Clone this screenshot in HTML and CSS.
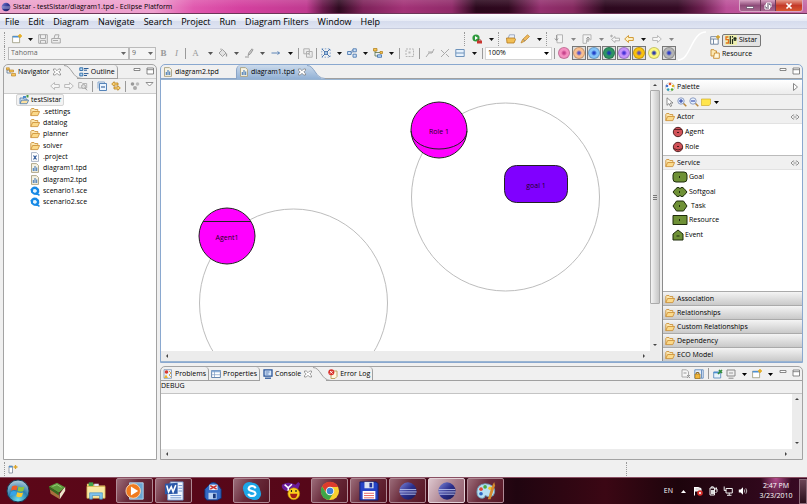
FILE: index.html
```html
<!DOCTYPE html>
<html lang="en">
<head>
<meta charset="utf-8">
<title>Sistar - testSistar/diagram1.tpd - Eclipse Platform</title>
<link rel="stylesheet" href="styles.css">
</head>
<body>
<svg class="sprite" aria-hidden="true">
  <defs>
    <linearGradient id="ecl" x1="0" y1="0" x2="1" y2="1"><stop offset="0" stop-color="#7d86d8"/><stop offset=".5" stop-color="#2b2f8c"/><stop offset="1" stop-color="#17164f"/></linearGradient>
    <radialGradient id="orb" cx=".5" cy=".9" r=".9"><stop offset="0" stop-color="#6fe0ee"/><stop offset=".5" stop-color="#2c7fae"/><stop offset="1" stop-color="#b7cfdd"/></radialGradient>
    <linearGradient id="tabBlue" x1="0" y1="0" x2="0" y2="1"><stop offset="0" stop-color="#cbdaeb"/><stop offset="1" stop-color="#92b1d5"/></linearGradient>
  </defs>
  <symbol id="caret" viewBox="0 0 10 10"><path d="M3 4h5L5.500 7z" fill="currentColor"/></symbol>
  <symbol id="folder" viewBox="0 0 10 10"><path d="M.8 8.500V2.500l.8-1h2.400l.8 1h3v1.500" fill="#fbe6b0" stroke="#c98a2d" stroke-width=".8"/><path d="M.8 8.600L2.600 4.500h7L7.800 8.600z" fill="#fbd98a" stroke="#c98a2d" stroke-width=".8"/></symbol>
  <symbol id="project" viewBox="0 0 10 10"><path d="M1 8.500V3h3l.8 1H8v1" fill="#d9e7f6" stroke="#4575a8" stroke-width=".8"/><path d="M1 8.700l1.600-3.500h7L8 8.700z" fill="#fbe0a0" stroke="#4a78ad" stroke-width=".8"/><path d="M4 1h3v2H4z" fill="#4a88cf"/><path d="M7.500 0h2v2.500h-2z" fill="#4a9a40"/></symbol>
  <symbol id="xfile" viewBox="0 0 10 10"><path d="M1.500.6h5l2 2v6.800h-7z" fill="#fff" stroke="#98a4b8" stroke-width=".8"/><path d="M3.500 3.500l3 4M6.500 3.500l-3 4" stroke="#224f94" stroke-width="1.200"/></symbol>
  <symbol id="tpd" viewBox="0 0 10 10"><path d="M1.500.6h5l2 2v6.800h-7z" fill="#f7f3e3" stroke="#a8a080" stroke-width=".9"/><path d="M3.300 8V5M5 8V3M6.700 8V4.500" stroke="#4a7db8" stroke-width="1.100"/></symbol>
  <symbol id="sce" viewBox="0 0 10 10"><path d="M2 1.500l2-1 2.500.3L9 3l.3 3L7.500 9 4 8.800 1.200 6.800.5 3.500z" fill="#1689e6"/><path d="M3.300 3.300l2.200-.3 1.500 1.700-.8 1.800-2 .2L3 5.200z" fill="#e4f4ff"/><path d="M6 7l3.500 2.300" stroke="#1689e6" stroke-width="1.500"/></symbol>
  <symbol id="nav" viewBox="0 0 10 10"><path d="M1 1v5h4M1 3h3" stroke="#5c7796" fill="none" stroke-width=".8"/><path d="M.3.800h3v2h-3zM3.500 3h4v2h-4zM5.500 6.500h4v2.500h-4z" fill="#f7c65a" stroke="#b27a1c" stroke-width=".6"/></symbol>
  <symbol id="outline" viewBox="0 0 10 10"><path d="M.8.800h3v2.700h-3zM.8 6.200h3v2.700h-3z" fill="#b9dcf5" stroke="#2a68a6" stroke-width=".9"/><path d="M5 1.500h4.500M5 3.200h3M5 6.600h4.500M5 8.500h3" stroke="#2a5c96"/></symbol>
  <symbol id="x" viewBox="0 0 10 10"><path d="M1.500 2h1.800L5 3.700 6.700 2h1.800v1.300L6.800 5l1.700 1.700V8H6.700L5 6.300 3.300 8H1.500V6.700L3.200 5 1.500 3.300z" fill="#fff" stroke="#777" stroke-width=".7"/></symbol>
  <symbol id="min" viewBox="0 0 10 10"><path d="M2 1.500h6v2H2z" fill="#fff" stroke="#6c6c6c" stroke-width=".8"/></symbol>
  <symbol id="max" viewBox="0 0 10 10"><path d="M2 1h6.500v6H2zM2 2.700h6.500" fill="#fff" stroke="#6c6c6c" stroke-width=".8"/></symbol>
  <symbol id="new" viewBox="0 0 10 10"><path d="M.6 2.200h7v6.500h-7z" fill="#fff" stroke="#8d8a68" stroke-width=".7"/><path d="M.6 2h7v1.500h-7z" fill="#4c8fd0"/><path d="M8 0v4M6 2h4" stroke="#e3aa1e" stroke-width="1.500"/></symbol>
  <symbol id="save" viewBox="0 0 10 10"><path d="M.7.700h8.600v8.600H.7zM2.500.700v3.800h5V.700M2.500 9.300V6.400h5v2.900" fill="#eee" stroke="#aaa"/></symbol>
  <symbol id="print" viewBox="0 0 10 10"><path d="M3 4.500L4 .8h4L7 4.500M.7 4.500h8.600V9H.7z" fill="#eee" stroke="#aaa"/><path d="M2 6.500h5" stroke="#aaa"/></symbol>
  <symbol id="run" viewBox="0 0 10 10"><circle cx="4" cy="4" r="3.600" fill="#2f9a3d"/><path d="M3 2l3 2-3 2z" fill="#fff"/><path d="M5 6.500h5v3H5z" fill="#c8342e"/><path d="M6.500 6.500v-.8h2v.8" stroke="#8c1c18" fill="none" stroke-width=".6"/></symbol>
  <symbol id="open" viewBox="0 0 10 10"><path d="M2 4.500L3.500.800h5L8.500 5" fill="#eaf0fa" stroke="#7f8fae" stroke-width=".7"/><path d="M.5 4h8l1 1.500-1.500 3.500h-7z" fill="#f2bf55" stroke="#b37a20" stroke-width=".8"/></symbol>
  <symbol id="pen" viewBox="0 0 10 10"><path d="M1 9l1.500-3.500L7.500.8l2 1.700L5 7z" fill="#f0b95c" stroke="#b9842a" stroke-width=".7"/><path d="M3 5.300l2 1.700" stroke="#888"/></symbol>
  <symbol id="annot" viewBox="0 0 10 10"><path d="M3 .8h5.500v8H3z" fill="#f4f4f4" stroke="#b4b4b4"/><path d="M2.500 1v5M.8 4.500l1.700 2 1.700-2" fill="none" stroke="#999"/></symbol>
  <symbol id="annotup" viewBox="0 0 10 10"><path d="M1 .8h8v5H4.500v3.500H1z" fill="#f4f4f4" stroke="#b4b4b4"/><path d="M6 8V3M4.300 4.700L6 3l1.700 1.700" fill="none" stroke="#999"/></symbol>
  <symbol id="back" viewBox="0 0 10 10"><path d="M.7 5l3.800-3.500v2H9.300v3H4.500v2z" fill="#fdf0c4" stroke="#cf9328" stroke-width=".9"/></symbol>
  <symbol id="gback" viewBox="0 0 10 10"><path d="M.7 5l3.800-3.500v2H9.300v3H4.500v2z" fill="#f6f6f6" stroke="#b4b4b4" stroke-width=".9"/></symbol>
  <symbol id="glast" viewBox="0 0 10 10"><path d="M1.500 5.500l3.500-3v1.700h4.500v2.600H5v1.700z" fill="#f6f6f6" stroke="#aaa" stroke-width=".9"/><path d="M1.500.5v3M0 2h3M.5 1l2 2M2.500 1l-2 2" stroke="#aaa" stroke-width=".6"/></symbol>
  <symbol id="gfwd" viewBox="0 0 10 10"><path d="M9.300 5L5.500 1.500v2H.7v3h4.800v2z" fill="#f6f6f6" stroke="#b4b4b4" stroke-width=".9"/></symbol>
  <symbol id="gup" viewBox="0 0 10 10"><path d="M.7 1.500h3l1 1h4V7h-8z" fill="#eee" stroke="#b4b4b4"/><circle cx="5.500" cy="5.500" r="2" fill="#ddd" stroke="#aaa"/><path d="M7 7l2 2.300" stroke="#999"/></symbol>
  <symbol id="collapse" viewBox="0 0 10 10"><path d="M1 1h6.500v6M1 1v6.500" fill="none" stroke="#88a9cf"/><path d="M2.500 2.500h7v7h-7z" fill="#eaf4ff" stroke="#5583b8"/><path d="M4 6h4" stroke="#1f4f8b"/></symbol>
  <symbol id="link" viewBox="0 0 10 10"><path d="M.7 3l2.500-2.300V2H7v2H3.200v1.300zM9.300 7L6.800 4.700V6H3v2h3.800v1.300z" fill="#fbd375" stroke="#b87d16" stroke-width=".8"/></symbol>
  <symbol id="filter" viewBox="0 0 10 10"><circle cx="2.500" cy="3" r="1.800" fill="#999"/><circle cx="7.500" cy="3" r="1.800" fill="#bbb"/><circle cx="5" cy="7" r="2" fill="#aaa"/></symbol>
  <symbol id="viewmenu" viewBox="0 0 10 10"><path d="M2 1.500h7L5.500 5z" fill="#fff" stroke="#777" stroke-width=".8"/></symbol>
  <symbol id="bucket" viewBox="0 0 10 10"><path d="M1 5l3.500-3.500L8 5 4.500 8.500zM3 2V.500" fill="#e2e2e2" stroke="#999" stroke-width=".9"/><path d="M8.500 5.500v3" stroke="#999" stroke-width="1.300"/></symbol>
  <symbol id="brush" viewBox="0 0 10 10"><path d="M1 9h4M4 7.500l1-3L8 .8l1 1-2.500 4z" stroke="#999" fill="#ccc"/></symbol>
  <symbol id="line" viewBox="0 0 10 10"><path d="M.5 5h8M6.500 3.500L8.500 5l-2 1.500" stroke="#4d79b0" fill="none" stroke-width=".9"/></symbol>
  <symbol id="copyapp" viewBox="0 0 10 10"><path d="M.8.800h5.500v5H.8zM3.500 3.500h5.700v5.700H3.500z" fill="#eee" stroke="#b0b0b0"/><path d="M5 5l2 2.500" stroke="#aaa"/></symbol>
  <symbol id="selall" viewBox="0 0 10 10"><path d="M.8.800h8.400v8.400H.8z" fill="none" stroke="#6d95c8" stroke-width=".8" stroke-dasharray="1.500 1.500"/><path d="M1 1l8 8M9 1L1 9" stroke="#3c6caa" stroke-width=".9"/><path d="M3.500 3.500h3v3h-3z" fill="#9ec3ea" stroke="#315e9a" stroke-width=".7"/></symbol>
  <symbol id="arrange" viewBox="0 0 10 10"><path d="M.6 3.500h3.500v3H.6zM6 .8h3.300v3H6zM6 6.200h3.300v3H6z" fill="#d2e5fa" stroke="#4d79b0" stroke-width=".9"/><path d="M4 5h1V2h1" stroke="#4d79b0" fill="none" stroke-width=".7"/></symbol>
  <symbol id="layout" viewBox="0 0 10 10"><path d="M2 2v6h4M2 4.500h5" stroke="#55714b" fill="none" stroke-width=".8"/><path d="M.5.500h3.500v2.500H.5zM7 3.500h2.500v2H7z" fill="#f5c451" stroke="#ac7a15" stroke-width=".7"/><path d="M4.500 6.800h4v2.500h-4z" fill="#b4d8fb" stroke="#3c6caa" stroke-width=".8"/></symbol>
  <symbol id="gsel" viewBox="0 0 10 10"><path d="M1 1h7.500v7.500H1z" fill="none" stroke="#b4b4b4" stroke-dasharray="2 1"/><path d="M3.500 3.500h2v2h-2z" fill="#bbb"/></symbol>
  <symbol id="galign" viewBox="0 0 10 10"><path d="M1 9L4 5h3l2-4M3 4h5" fill="none" stroke="#aaa"/></symbol>
  <symbol id="gcross" viewBox="0 0 10 10"><path d="M1 9l8-8M1 2l3 3M6 6l3 3" fill="none" stroke="#aaa"/></symbol>
  <symbol id="comp" viewBox="0 0 10 10"><path d="M.8 1.500h8.400v7H.8zM.8 5h8.400" fill="#e6f1fc" stroke="#6e93bb"/></symbol>
  <symbol id="openpersp" viewBox="0 0 10 10"><path d="M.7 1.700h7.500v7.500H.7zM.7 4h7.500M3.500 4v5" fill="#fff" stroke="#6a7f9b" stroke-width=".9"/><path d="M8 0v4.500M6 2h4" stroke="#d3a129" stroke-width="1.300"/></symbol>
  <symbol id="sistar" viewBox="0 0 12 10"><path d="M0 0h12v10H0z" fill="#eff0b0"/><path d="M3.500 2H1v2.700h2.500V8H.8" fill="none" stroke="#e0701c" stroke-width="1.300"/><path d="M5.300 1v8M7.500 1v1.500M7.500 4v5M10 2v4M8.500 3l3 2M11.500 3l-3 2" stroke="#1c2a1c" stroke-width="1.200"/></symbol>
  <symbol id="resource" viewBox="0 0 10 10"><path d="M1 .7h3l1 1.200h1.500V7H1z" fill="#fce9b4" stroke="#c98a2d" stroke-width=".9"/><path d="M4.500 4h4.800v5.300H3.500z" fill="#fff7dc" stroke="#c98a2d" stroke-width=".9"/></symbol>
  <symbol id="palette" viewBox="0 0 10 10"><circle cx="5" cy="5" r="4.400" fill="#fff" stroke="#b8b8b8" stroke-width=".6"/><circle cx="5" cy="2" r="1.300" fill="#e2552d"/><circle cx="8" cy="4" r="1.300" fill="#e8b520"/><circle cx="7" cy="7.500" r="1.300" fill="#53ad36"/><circle cx="3.200" cy="7.600" r="1.300" fill="#2c9cb5"/><circle cx="2" cy="4" r="1.300" fill="#4772cf"/></symbol>
  <symbol id="ptr" viewBox="0 0 10 10"><path d="M2 .8v7.500l2-1.800 1.500 3 1.200-.7L5.300 6H8z" fill="#fff" stroke="#666" stroke-width=".7"/></symbol>
  <symbol id="zin" viewBox="0 0 10 10"><path d="M6 6l3.300 3.300" stroke="#b8863b" stroke-width="1.500"/><circle cx="4" cy="4" r="3.200" fill="#e4efff" stroke="#7a8bb5" stroke-width=".8"/><path d="M2 4h4M4 2v4" stroke="#2139a0"/></symbol>
  <symbol id="zout" viewBox="0 0 10 10"><path d="M6 6l3.300 3.300" stroke="#b8863b" stroke-width="1.500"/><circle cx="4" cy="4" r="3.200" fill="#e4efff" stroke="#7a8bb5" stroke-width=".8"/><path d="M2 4h4" stroke="#2139a0"/></symbol>
  <symbol id="note" viewBox="0 0 10 10"><path d="M.4 2h9.200v5L8 8.500H.4z" fill="#ffe54e" stroke="#c7a11c" stroke-width=".6"/></symbol>
  <symbol id="pin" viewBox="0 0 10 10"><path d="M4.200 3H3L1 5l2 2h1.200M5.800 3H7l2 2-2 2H5.800M3.500 5h3" fill="none" stroke="#777" stroke-width=".8"/></symbol>
  <symbol id="agent" viewBox="0 0 12 12"><circle cx="6" cy="6" r="4.700" fill="#d25258" stroke="#461719" stroke-width=".9"/><path d="M2 3.500h8" stroke="#461719" stroke-width=".8"/><path d="M5 6.500h2" stroke="#461719"/></symbol>
  <symbol id="role" viewBox="0 0 12 12"><circle cx="6" cy="6" r="4.700" fill="#d25258" stroke="#461719" stroke-width=".9"/><path d="M1.500 7.500Q6 10.500 10.500 7.500" fill="none" stroke="#461719" stroke-width=".8"/><path d="M5 5.500h2" stroke="#461719"/></symbol>
  <symbol id="goal" viewBox="0 0 16 12"><rect x="1" y="1" width="14" height="10" rx="3" fill="#6f9136" stroke="#1f2c0c"/><path d="M7.500 5v2" stroke="#1f2c0c"/></symbol>
  <symbol id="soft" viewBox="0 0 16 12"><path d="M1 6l3-3.500Q6 0 8 2.500 10 0 12 2.500L15 6l-3 3.500Q10 12 8 9.500 6 12 4 9.500z" fill="#6f9136" stroke="#1f2c0c"/><path d="M7.500 5v2" stroke="#1f2c0c"/></symbol>
  <symbol id="task" viewBox="0 0 16 12"><path d="M1 6l3.500-5h7L15 6l-3.500 5h-7z" fill="#6f9136" stroke="#1f2c0c"/><path d="M7.500 5v2" stroke="#1f2c0c"/></symbol>
  <symbol id="res" viewBox="0 0 16 12"><path d="M1 1.500h14v9H1z" fill="#6f9136" stroke="#1f2c0c"/><path d="M7.500 5v2" stroke="#1f2c0c"/></symbol>
  <symbol id="event" viewBox="0 0 12 12"><path d="M1 11V5l5-4 5 4v6z" fill="#6f9136" stroke="#1f2c0c"/><path d="M4.500 7h3" stroke="#1f2c0c"/></symbol>
  <symbol id="problems" viewBox="0 0 10 10"><path d="M1 .7h7.500v8.600H1z" fill="#eff4fb" stroke="#7993b4" stroke-width=".8"/><circle cx="3.500" cy="3" r="1.800" fill="#d83a32"/><path d="M1 9l2-3.500L5 9z" fill="#eeb32c"/><path d="M6 2l2 2-2 2 2 2" fill="none" stroke="#d29128" stroke-width=".8"/></symbol>
  <symbol id="props" viewBox="0 0 10 10"><path d="M.6 1.500h8.800v7H.6z" fill="#fff" stroke="#587aa6" stroke-width=".9"/><path d="M.6 1.500h8.800v1.800H.6z" fill="#8fb1da"/><path d="M3.500 2v6M1 5.700h8" stroke="#7d9cc4" stroke-width=".7"/></symbol>
  <symbol id="console" viewBox="0 0 10 10"><path d="M1 .8h8v6.400H1z" fill="#d9e9fb" stroke="#2a5598" stroke-width="1.300"/><path d="M2.500 3h4M2.500 5h3" stroke="#3c62a5" stroke-width=".8"/><path d="M2 9.200h6" stroke="#2a5598" stroke-width="1.300"/></symbol>
  <symbol id="errlog" viewBox="0 0 10 10"><path d="M3 2h6v5.500L7 9.500H3z" fill="#fdf6e0" stroke="#b89a55" stroke-width=".9"/><circle cx="3.300" cy="3.300" r="3" fill="#d9302b"/><path d="M2 2l2.600 2.600M4.600 2L2 4.600" stroke="#fff" stroke-width=".9"/></symbol>
  <symbol id="clear" viewBox="0 0 10 10"><path d="M1 .8h4.500l2 2V8H1z" fill="#f5f5f5" stroke="#aaa"/><path d="M2.500 4h3M6 6l3 3M9 6L6 9" stroke="#999"/></symbol>
  <symbol id="lock" viewBox="0 0 10 10"><path d="M.8.800h8.400v8.400H.8z" fill="#e6f0fb" stroke="#6d93c2"/><path d="M7.500 1v8" stroke="#6d93c2"/><path d="M1 5h5v4.500H1z" fill="#f1b73b" stroke="#a37316" stroke-width=".7"/><path d="M2.300 5V3.500h2.500V5" fill="none" stroke="#8b6a28"/></symbol>
  <symbol id="pinc" viewBox="0 0 10 10"><path d="M.7 3h7v6h-7z" fill="#e8f3fc" stroke="#5f90bd" stroke-width=".9"/><path d="M.7 2.800h7v1.500h-7z" fill="#4c8fd0"/><path d="M5 5l2-2M6 1l3 3M7.500 2.500L9 1" stroke="#2f8c3d" stroke-width="1.700"/></symbol>
  <symbol id="disp" viewBox="0 0 10 10"><path d="M1 1h8v6H1zM2.500 9.200h5" fill="#eee" stroke="#888"/><path d="M3 4h4" stroke="#999"/></symbol>
  <symbol id="fastview" viewBox="0 0 10 10"><path d="M1 2h3.500v7H1z" fill="#fff" stroke="#7a8795" stroke-width=".8"/><path d="M1 2h3.500v1.500H1z" fill="#4c8fd0"/><path d="M7.500 1v4M5.500 3h4" stroke="#daa52c" stroke-width="1.300"/></symbol>
  <symbol id="eclipse" viewBox="0 0 22 22"><circle cx="11" cy="11" r="9.500" fill="url(#ecl)"/><path d="M2 9.500h18M1.500 12h19M2.500 14.500h17" stroke="#c6cbf3" stroke-width="1"/></symbol>
  <symbol id="orbicon" viewBox="0 0 24 24"><circle cx="12" cy="12" r="11" fill="url(#orb)" stroke="#173c55"/><path d="M6 7.500q3-2 5.500-.3L10.500 11.500Q8 10 5 11.800z" fill="#ee5b27"/><path d="M12.500 7.500q3 1.500 6 0l-1.200 4.500q-3 1.200-5.800-.2z" fill="#8cc63e"/><path d="M4.800 13q3-1.800 5.500-.2L9.200 17Q7 15.500 3.900 17z" fill="#36a4e8"/><path d="M11.300 13.200q3 1.400 5.800.2l-1.200 4.200q-3 1.200-5.700-.3z" fill="#fcc92e"/></symbol>
  <symbol id="books" viewBox="0 0 22 22"><path d="M3 9l10 5 1 6-10-6z" fill="#a9713e"/><path d="M14 14l6-8v5l-6 9z" fill="#efe5cc"/><path d="M2 6l9-4 9 5-7 6z" fill="#5c9a3c"/><path d="M2 6l11 7v3L3 9z" fill="#35691f"/><path d="M6 6l5-2 5 3" fill="none" stroke="#9fd07e"/></symbol>
  <symbol id="explorer" viewBox="0 0 22 22"><path d="M1 3h7l1 2h12v13H1z" fill="#eccb6c"/><path d="M3 1.500h5v4H3z" fill="#3ea34d"/><path d="M9 3h5v3H9z" fill="#e8e8f6"/><path d="M1 6h20v13H1z" fill="#f9e8a4" stroke="#c9a13f" stroke-width=".7"/><path d="M4 20v-7h14v7h-3v-4H7v4z" fill="#7fc3ee" stroke="#3d86ba" stroke-width=".7"/></symbol>
  <symbol id="wmp" viewBox="0 0 22 22"><path d="M5 2h15v18H5z" fill="#6ba5d2" stroke="#b7dcf3"/><circle cx="9" cy="11" r="8" fill="#f07a1e" stroke="#f5d7bd"/><path d="M6.500 6v10l8-5z" fill="#fff"/></symbol>
  <symbol id="word" viewBox="0 0 22 22"><path d="M7 1h14v20H4V14z" fill="#f2f7ff" stroke="#6d90c8"/><path d="M16 5h4M16 8h4M16 11h4M7 16h12M7 18.500h12" stroke="#6990cd"/><path d="M1 3l14-1v12L1 14.500z" fill="#2b58a8"/><path d="M3 5l2 7L8 6.500 10 12l3-7.500" fill="none" stroke="#fff" stroke-width="1.700"/></symbol>
  <symbol id="floppybag" viewBox="0 0 22 22"><path d="M6 5q5-7 11 0l3 4v10l-4 2H4L2 18V9z" fill="#3269c5" stroke="#132f6e"/><path d="M7 4h9v6H7z" fill="#e7eef9"/><path d="M8 5l7 4M15 5l-7 4" stroke="#c7302d" stroke-width="1.500"/><path d="M6 13h9v7H6z" fill="#b6cff1"/><path d="M11 14h3v5h-3z" fill="#173779"/></symbol>
  <symbol id="skype" viewBox="0 0 22 22"><circle cx="8" cy="8" r="7" fill="#1da7e8"/><circle cx="14" cy="14" r="7" fill="#1da7e8"/><circle cx="11" cy="11" r="9" fill="#1da7e8"/><path d="M15 8Q14 5.500 11 5.500T7.200 8.300Q7.200 10.300 11 11T15 14Q14.500 16.500 11 16.500T7 14" fill="none" stroke="#fff" stroke-width="2.200"/></symbol>
  <symbol id="yahoo" viewBox="0 0 22 22"><path d="M1 4q7-4 15 0l3-3 2 2-3 8H6Q0 9 1 4z" fill="#6a1b9a"/><path d="M4 4l4 3.500V11M12 3.500l-4 4" fill="none" stroke="#fff" stroke-width="1.700"/><circle cx="14" cy="14" r="6.500" fill="#fcd01e" stroke="#b37b06" stroke-width=".7"/><path d="M10 14h8q-.5 5-4 5t-4-5z" fill="#a21d16"/><path d="M11.500 10v2M16.500 10v2" stroke="#222" stroke-width="1.300"/></symbol>
  <symbol id="chrome" viewBox="0 0 22 22"><circle cx="11" cy="11" r="10" fill="#f8d12f"/><path d="M2.300 6A10 10 0 0 1 20 6.500H11L7 13z" fill="#de3b2d"/><path d="M2.300 6A10 10 0 0 0 10 21l4.500-7.500H7z" fill="#3fa648"/><circle cx="11" cy="11" r="4.700" fill="#f5f5f5"/><circle cx="11" cy="11" r="3.600" fill="#3c82d6"/></symbol>
  <symbol id="floppy" viewBox="0 0 22 22"><path d="M1 1h18l2 2v18H1z" fill="#2543c6" stroke="#101f70"/><path d="M6 1h10v7H6z" fill="#dde3ef"/><path d="M11.500 2h3v5h-3z" fill="#1e329c"/><path d="M4 11h14v9H4z" fill="#fff"/><path d="M5.500 13.500h11M5.500 16h11M5.500 18.500h11" stroke="#e05757"/></symbol>
  <symbol id="paint" viewBox="0 0 22 22"><path d="M10 3Q1 4 1 12q0 7 6 7 3 0 3-3 5 3 9 0 4-7-2-11-3-2-7-2z" fill="#b6dff3" stroke="#6a9ab6"/><circle cx="5.500" cy="9" r="2" fill="#e3482f"/><circle cx="10" cy="6.500" r="2" fill="#49a942"/><circle cx="5.500" cy="14" r="2" fill="#2e66c4"/><circle cx="15.500" cy="8" r="2" fill="#f4c422"/><path d="M13 20l4-13 3-6 1 4-5 15z" fill="#d58a2f"/></symbol>
  <symbol id="flag" viewBox="0 0 10 10"><path d="M1.500 1v8.500M2 1.500h3l3 1v3.500l-3-1H2z" stroke="#fff" fill="#ddd"/><circle cx="7" cy="7" r="2.800" fill="#d9302b"/><path d="M6 6l2 2M8 6L6 8" stroke="#fff" stroke-width=".8"/></symbol>
  <symbol id="power" viewBox="0 0 10 10"><path d="M2 2h4.500v7H2zM3.300 2V.800h2V2M6 3h3v2.500L7.500 7M7 3V1.500M8.500 3V1.500" fill="none" stroke="#eee"/><path d="M3 4h3v4H3z" fill="#ddd"/></symbol>
  <symbol id="net" viewBox="0 0 10 10"><path d="M3 2.500h6.300V7H3zM4 9.300h4.500M6.200 7v2M1.200.5v4h2" fill="none" stroke="#eee"/></symbol>
  <symbol id="vol" viewBox="0 0 10 10"><path d="M.8 3.500h1.800L5 1.200v7.600L2.600 6.500H.8z" fill="#fff"/><path d="M6.300 3.500q1 1.500 0 3M7.800 2.300q2 2.700 0 5.400" fill="none" stroke="#ddd" stroke-width=".8"/></symbol>
</svg>

<header class="titlebar">
  <svg class="ic"><use href="#eclipse"/></svg>
  <h1>Sistar - testSistar/diagram1.tpd - Eclipse Platform</h1>
  <div class="winbtns">
    <button class="wmin" aria-label="Minimize"><svg viewBox="0 0 10 8"><path d="M1.500 4.500h7v2h-7z" fill="#fff" stroke="#4b3550" stroke-width=".6"/></svg></button>
    <button class="wmax" aria-label="Restore"><svg viewBox="0 0 10 8"><path d="M3.500 1h4.500v4H3.500zM2 3h4.500v4H2z" fill="#574560" stroke="#fff"/></svg></button>
    <button class="wclose" aria-label="Close"><svg viewBox="0 0 10 8"><path d="M2.500 1.500l5 5M7.500 1.500l-5 5" stroke="#fff" stroke-width="1.700"/></svg></button>
  </div>
</header>

<nav class="menubar">
  <a href="#">File</a><a href="#">Edit</a><a href="#">Diagram</a><a href="#">Navigate</a><a href="#">Search</a><a href="#">Project</a><a href="#">Run</a><a href="#">Diagram Filters</a><a href="#">Window</a><a href="#">Help</a>
</nav>

<section class="toolbars">
  <div class="rows">
    <div class="row main">
      <div class="group">
        <i class="grip"></i>
        <button aria-label="New"><svg class="ic"><use href="#new"/></svg></button><button aria-label="New menu"><svg class="ic"><use href="#caret"/></svg></button>
        <button aria-label="Save"><svg class="ic"><use href="#save"/></svg></button><button aria-label="Print"><svg class="ic"><use href="#print"/></svg></button>
      </div>
      <div class="group push">
        <i class="grip"></i>
        <button aria-label="Run tool"><svg class="ic"><use href="#run"/></svg></button><button aria-label="Run menu"><svg class="ic"><use href="#caret"/></svg></button>
        <i class="grip"></i>
        <button aria-label="Open"><svg class="ic"><use href="#open"/></svg></button><button aria-label="Search"><svg class="ic"><use href="#pen"/></svg></button><button aria-label="Search menu"><svg class="ic"><use href="#caret"/></svg></button>
        <i class="grip"></i>
        <button aria-label="Next annotation"><svg class="ic"><use href="#annot"/></svg></button><button class="dim" aria-label="Next menu"><svg class="ic"><use href="#caret"/></svg></button>
        <button aria-label="Previous annotation"><svg class="ic"><use href="#annotup"/></svg></button><button class="dim" aria-label="Previous menu"><svg class="ic"><use href="#caret"/></svg></button>
        <button aria-label="Last edit"><svg class="ic"><use href="#glast"/></svg></button><button aria-label="Back"><svg class="ic"><use href="#back"/></svg></button><button aria-label="Back menu"><svg class="ic"><use href="#caret"/></svg></button>
        <button aria-label="Forward"><svg class="ic"><use href="#gfwd"/></svg></button><button class="dim" aria-label="Forward menu"><svg class="ic"><use href="#caret"/></svg></button>
      </div>
    </div>
    <div class="row">
      <div class="group">
        <i class="grip"></i>
        <span class="combo off font"><select aria-label="Font" disabled><option>Tahoma</option></select><svg class="ic"><use href="#caret"/></svg></span>
        <span class="combo off size"><select aria-label="Font size" disabled><option>9</option></select><svg class="ic"><use href="#caret"/></svg></span>
      </div>
      <div class="group">
        <button class="ltr"><b>B</b></button><button class="ltr"><em>I</em></button><i class="sep"></i>
        <button class="ltr wide">A</button><button class="dark" aria-label="Font color"><svg class="ic"><use href="#caret"/></svg></button>
        <button aria-label="Fill"><svg class="ic"><use href="#bucket"/></svg></button><button class="dark" aria-label="Fill menu"><svg class="ic"><use href="#caret"/></svg></button>
        <button aria-label="Line color"><svg class="ic"><use href="#brush"/></svg></button><button class="dark" aria-label="Line color menu"><svg class="ic"><use href="#caret"/></svg></button>
        <button class="wide" aria-label="Line style"><svg class="ic"><use href="#line"/></svg></button><button aria-label="Line style menu"><svg class="ic"><use href="#caret"/></svg></button>
        <i class="sep"></i><button aria-label="Copy appearance"><svg class="ic"><use href="#copyapp"/></svg></button><i class="sep"></i>
        <button aria-label="Select all"><svg class="ic"><use href="#selall"/></svg></button><button aria-label="Select menu"><svg class="ic"><use href="#caret"/></svg></button>
        <button aria-label="Arrange"><svg class="ic"><use href="#arrange"/></svg></button><button aria-label="Arrange menu"><svg class="ic"><use href="#caret"/></svg></button>
        <button aria-label="Layout"><svg class="ic"><use href="#layout"/></svg></button><button aria-label="Layout menu"><svg class="ic"><use href="#caret"/></svg></button>
        <i class="sep"></i><button class="wide" aria-label="Auto size"><svg class="ic"><use href="#gsel"/></svg></button><i class="sep"></i>
        <button class="wide" aria-label="Align"><svg class="ic"><use href="#galign"/></svg></button><button class="wide" aria-label="Cross"><svg class="ic"><use href="#gcross"/></svg></button>
        <button class="wide" aria-label="Compartments"><svg class="ic"><use href="#comp"/></svg></button><button aria-label="Compartment menu"><svg class="ic"><use href="#caret"/></svg></button>
        <i class="sep"></i>
      </div>
      <span class="combo zoom"><select aria-label="Zoom"><option>100%</option></select><svg class="ic"><use href="#caret"/></svg></span>
      <i class="sep"></i>
      <div class="filters">
        <button class="dot pink" aria-label="Filter 1"></button><button class="dot peach on" aria-label="Filter 2"></button><button class="dot sky on" aria-label="Filter 3"></button><button class="dot green on" aria-label="Filter 4"></button><button class="dot violet on" aria-label="Filter 5"></button><button class="dot gold on" aria-label="Filter 6"></button><button class="dot lemon" aria-label="Filter 7"></button><button class="dot gray on" aria-label="Filter 8"></button>
      </div>
    </div>
  </div>
  <svg class="swoop" viewBox="0 0 28 34"><path d="M0 31C13 31 13 3 28 3" fill="none" stroke="#fff" stroke-width="1.500"/></svg>
  <div class="persp">
    <div class="prow"><button aria-label="Open perspective"><svg class="ic"><use href="#openpersp"/></svg></button><button class="cur"><svg class="ic2"><use href="#sistar"/></svg>Sistar</button></div>
    <div class="prow"><button class="res"><svg class="ic"><use href="#resource"/></svg>Resource</button></div>
  </div>
</section>

<main>
  <section class="view navigator">
    <div class="tabs">
      <button class="tab"><svg class="ic"><use href="#nav"/></svg>Navigator<svg class="ic"><use href="#x"/></svg></button>
      <svg class="slope" viewBox="0 0 18 14"><path d="M0 .5C8 .5 8 13.500 18 13.500" fill="none" stroke="#a0a0a0"/></svg>
      <button class="tab other"><svg class="ic"><use href="#outline"/></svg>Outline</button>
      <span class="ctl"><button aria-label="Minimize view"><svg class="ic"><use href="#min"/></svg></button><button aria-label="Maximize view"><svg class="ic"><use href="#max"/></svg></button></span>
    </div>
    <div class="viewbar">
      <button aria-label="Back"><svg class="ic"><use href="#gback"/></svg></button><button aria-label="Forward"><svg class="ic"><use href="#gfwd"/></svg></button><button aria-label="Up"><svg class="ic"><use href="#gup"/></svg></button><i class="sep"></i><button aria-label="Collapse all"><svg class="ic"><use href="#collapse"/></svg></button><button aria-label="Link with editor"><svg class="ic"><use href="#link"/></svg></button><i class="sep"></i><button aria-label="Filters"><svg class="ic"><use href="#filter"/></svg></button><button aria-label="View menu"><svg class="ic"><use href="#viewmenu"/></svg></button>
    </div>
    <div class="treepane">
      <ul class="tree">
        <li class="root"><span><svg class="ic"><use href="#project"/></svg>testSistar</span></li>
        <li><svg class="ic"><use href="#folder"/></svg>.settings</li>
        <li><svg class="ic"><use href="#folder"/></svg>datalog</li>
        <li><svg class="ic"><use href="#folder"/></svg>planner</li>
        <li><svg class="ic"><use href="#folder"/></svg>solver</li>
        <li><svg class="ic"><use href="#xfile"/></svg>.project</li>
        <li><svg class="ic"><use href="#tpd"/></svg>diagram1.tpd</li>
        <li><svg class="ic"><use href="#tpd"/></svg>diagram2.tpd</li>
        <li><svg class="ic"><use href="#sce"/></svg>scenario1.sce</li>
        <li><svg class="ic"><use href="#sce"/></svg>scenario2.sce</li>
      </ul>
    </div>
  </section>

  <div class="right">
    <section class="view editor">
      <div class="tabs">
        <button class="tab first"><svg class="ic"><use href="#tpd"/></svg>diagram2.tpd</button>
        <button class="tab active"><svg class="ic"><use href="#tpd"/></svg>diagram1.tpd<svg class="ic"><use href="#x"/></svg></button>
        <svg class="slope" viewBox="0 0 18 14"><path d="M0 0C8 0 8 14 18 14H0z" fill="url(#tabBlue)"/><path d="M0 .5C8 .5 8 13.500 18 13.500" fill="none" stroke="#8ba5c6"/></svg>
        <span class="ctl"><button aria-label="Minimize editor"><svg class="ic"><use href="#min"/></svg></button><button aria-label="Maximize editor"><svg class="ic"><use href="#max"/></svg></button></span>
      </div>
      <div class="edbody">
        <div class="canvaswrap">
          <div class="canvasrow">
            <svg class="canvas" role="img" aria-label="Diagram">
              <g fill="none" stroke="#bdbdbd"><circle cx="344.500" cy="117" r="94"/><circle cx="132.500" cy="223" r="94"/></g>
              <g fill="#f0f" stroke="#222"><circle cx="278" cy="50" r="28"/><path d="M250 51C252 75 304 75 306 51" fill="none"/><circle cx="66" cy="156" r="28"/><path d="M42 141.500h48"/></g>
              <rect x="343.500" y="85.500" width="63" height="37" rx="12" fill="#8000ff" stroke="#222"/>
              <g class="lbl"><text x="278" y="54">Role 1</text><text x="375" y="108">goal 1</text><text x="66" y="160">Agent1</text></g>
            </svg>
            <div class="vbar"><i class="up"></i><span class="thumb"></span><i class="down"></i></div>
          </div>
          <div class="hbar"><i class="lt"></i><i class="rt"></i></div>
        </div>
        <aside class="palette">
          <div class="phead"><svg class="ic"><use href="#palette"/></svg>Palette<svg class="ic end" viewBox="0 0 10 10"><path d="M3.500 1.500v7l4-3.500z" fill="#fff" stroke="#888"/></svg></div>
          <div class="ptools"><button class="sel" aria-label="Select"><svg class="ic"><use href="#ptr"/></svg></button><button aria-label="Zoom in"><svg class="ic"><use href="#zin"/></svg></button><button aria-label="Zoom out"><svg class="ic"><use href="#zout"/></svg></button><button aria-label="Note"><svg class="ic"><use href="#note"/></svg></button><button class="sm" aria-label="Note menu"><svg class="ic"><use href="#caret"/></svg></button></div>
          <button class="dhead"><svg class="ic"><use href="#folder"/></svg>Actor<svg class="ic end"><use href="#pin"/></svg></button>
          <ul class="pitems two">
            <li><svg class="i12"><use href="#agent"/></svg>Agent</li>
            <li><svg class="i12"><use href="#role"/></svg>Role</li>
          </ul>
          <button class="dhead"><svg class="ic"><use href="#folder"/></svg>Service<svg class="ic end"><use href="#pin"/></svg></button>
          <ul class="pitems five">
            <li><svg class="i16"><use href="#goal"/></svg>Goal</li>
            <li><svg class="i16"><use href="#soft"/></svg>Softgoal</li>
            <li class="gap"><svg class="i16"><use href="#task"/></svg>Task</li>
            <li><svg class="i16"><use href="#res"/></svg>Resource</li>
            <li><svg class="i12"><use href="#event"/></svg>Event</li>
          </ul>
          <div class="drawers">
            <button><svg class="ic"><use href="#folder"/></svg>Association</button>
            <button><svg class="ic"><use href="#folder"/></svg>Relationships</button>
            <button><svg class="ic"><use href="#folder"/></svg>Custom Relationships</button>
            <button><svg class="ic"><use href="#folder"/></svg>Dependency</button>
            <button><svg class="ic"><use href="#folder"/></svg>ECO Model</button>
          </div>
        </aside>
      </div>
    </section>

    <section class="view bottom">
      <div class="tabs">
        <button class="tab edge"><svg class="ic"><use href="#problems"/></svg>Problems</button>
        <button class="tab edge"><svg class="ic"><use href="#props"/></svg>Properties</button>
        <button class="tab front"><svg class="ic"><use href="#console"/></svg>Console<svg class="ic"><use href="#x"/></svg></button>
        <svg class="slope" viewBox="0 0 18 14"><path d="M0 .5C8 .5 8 13.500 18 13.500" fill="none" stroke="#a0a0a0"/></svg>
        <button class="tab other"><svg class="ic"><use href="#errlog"/></svg>Error Log</button>
        <span class="ctl"><button aria-label="Clear console"><svg class="ic"><use href="#clear"/></svg></button><button aria-label="Scroll lock"><svg class="ic"><use href="#lock"/></svg></button><i class="sep"></i><button aria-label="Pin console"><svg class="ic"><use href="#pinc"/></svg></button><button aria-label="Display console"><svg class="ic"><use href="#disp"/></svg></button><button class="dark" aria-label="Display menu"><svg class="ic"><use href="#caret"/></svg></button><button aria-label="Open console"><svg class="ic"><use href="#new"/></svg></button><button aria-label="Open console menu"><svg class="ic"><use href="#caret"/></svg></button><button aria-label="Minimize console"><svg class="ic"><use href="#min"/></svg></button><button aria-label="Maximize console"><svg class="ic"><use href="#max"/></svg></button></span>
      </div>
      <div class="debug">DEBUG</div>
      <div class="canvasrow">
        <div class="out"></div>
        <div class="vbar"><i class="up"></i><i class="down"></i></div>
      </div>
      <div class="hbar"><i class="lt"></i><i class="rt"></i></div>
    </section>
  </div>
</main>

<footer class="status"><i class="grip"></i><button aria-label="Fast view"><svg class="ic"><use href="#fastview"/></svg></button><i class="grip far"></i></footer>

<div class="taskbar">
  <button class="start" aria-label="Start"><svg><use href="#orbicon"/></svg></button>
  <button class="app" aria-label="Books"><svg><use href="#books"/></svg></button>
  <button class="app" aria-label="Explorer"><svg><use href="#explorer"/></svg></button>
  <button class="app open" aria-label="Media player"><svg><use href="#wmp"/></svg></button>
  <button class="app open" aria-label="Word"><svg><use href="#word"/></svg></button>
  <button class="app" aria-label="Backup"><svg><use href="#floppybag"/></svg></button>
  <button class="app open" aria-label="Skype"><svg><use href="#skype"/></svg></button>
  <button class="app" aria-label="Messenger"><svg><use href="#yahoo"/></svg></button>
  <button class="app open" aria-label="Chrome"><svg><use href="#chrome"/></svg></button>
  <button class="app open" aria-label="Commander"><svg><use href="#floppy"/></svg></button>
  <button class="app open" aria-label="Eclipse"><svg><use href="#eclipse"/></svg></button>
  <button class="app open lit" aria-label="Eclipse Sistar"><svg><use href="#eclipse"/></svg></button>
  <button class="app open" aria-label="Paint"><svg><use href="#paint"/></svg></button>
  <div class="tray">
    <span class="lang">EN</span>
    <svg class="ic" viewBox="0 0 10 10"><path d="M3 7h5L5.500 4z" fill="#fff"/></svg>
    <svg class="ic"><use href="#flag"/></svg><svg class="ic"><use href="#power"/></svg><svg class="ic"><use href="#net"/></svg><svg class="ic"><use href="#vol"/></svg>
    <time class="clock">2:47 PM<br>3/23/2010</time>
    <button class="desk" aria-label="Show desktop"></button>
  </div>
</div>
</body>
</html>
```
FILE: styles.css
```css
* { box-sizing: border-box; }
body {
  margin: 0;
  height: 100vh;
  display: flex;
  flex-direction: column;
  overflow: hidden;
  background: #f0f0f0;
  color: #000;
  font: 7px/10px "Open Sans", "Noto Sans", sans-serif;
}
button {
  font: inherit;
  color: inherit;
  padding: 0;
  border: 0;
  background: none;
  display: flex;
  align-items: center;
  justify-content: center;
  flex: none;
}
ul { list-style: none; margin: 0; padding: 0; }
.sprite { position: absolute; width: 0; height: 0; }
.ic { width: 10px; height: 10px; flex: none; }
.ic2 { width: 12px; height: 10px; flex: none; }
.i12 { width: 12px; height: 12px; flex: none; }
.i16 { width: 16px; height: 12px; flex: none; }

/* title bar */
.titlebar {
  flex: none;
  height: 14px;
  display: flex;
  align-items: center;
  gap: 2px;
  padding-left: 1px;
  border-bottom: 1px solid #6b3658;
  background:
    linear-gradient(rgba(255,255,255,.12), transparent 60%),
    linear-gradient(90deg, #eba3cb 0, #ee9fce 19%, #e058ae 24%, #d4409f 30%, #c03a90 38%, #6a1a4c 40%, #2e0a20 42%, #7d2259 45%, #a33277 50%, #902a69 56%, #2a071c 59%, #30081f 63%, #94306f 67%, #85285f 71%, #2c081e 75%, #340a24 84%, #6d1f50 87%, #bb4f98 90%, #c56aa6 100%);
}
.titlebar h1 { margin: 0; font: inherit; }
.winbtns { display: flex; margin-left: auto; margin-right: 4px; align-self: flex-start; border: 1px solid #d9a7c6; border-top: 0; border-radius: 0 0 3px 3px; overflow: hidden; }
.winbtns button { height: 11px; }
.winbtns svg { width: 10px; height: 8px; }
.wmin { width: 20px; background: linear-gradient(#d7a3c3, #8e4b79 50%, #a6668f); }
.wmax { width: 15px; background: linear-gradient(#d7a3c3, #8e4b79 50%, #a6668f); border-left: 1px solid #6c3959; }
.wclose { width: 27px; background: linear-gradient(#e59a8b, #c43a28 50%, #d8572f); border-left: 1px solid #6c3959; }

/* menu */
.menubar {
  flex: none;
  height: 15px;
  display: flex;
  align-items: center;
  gap: 9px;
  padding: 0 5px;
  font-size: 9px;
  line-height: 13px;
  border-bottom: 1px solid #c6cbdc;
  background: linear-gradient(#fdfdff, #e6eaf5 50%, #d6dced 51%, #dfe4f2);
}
.menubar a { color: inherit; text-decoration: none; }

/* toolbars */
.toolbars { flex: none; display: flex; height: 35px; }
.rows { display: flex; flex-direction: column; padding: 3px 0 0 4px; flex: 0 1 678px; }
.row { display: flex; height: 14px; align-items: center; }
.group { display: flex; align-items: center; }
.group button { width: 13px; height: 13px; color: #111; }
.main .push button { width: 14px; }
.main .push { padding-right: 0; }
.group button.wide { width: 15px; }
.group button.dim { color: #888; }
.group button.dark { color: #555; }
.push { margin-left: auto; }
.grip { width: 1px; height: 14px; margin-right: 3px; flex: none; border-left: 1px dotted #999; }
.main .grip { margin-right: 5px; }
.sep { width: 1px; height: 11px; margin: 0 2px; flex: none; background: #9a9a9a; }
.ltr { font: 9px/12px "Liberation Serif", serif; }
.group button.ltr { color: #999; }
.combo { display: flex; align-items: center; height: 13px; background: #fff; border: 1px solid #d4d4d4; }
.combo.off { background: #f4f4f4; border-color: #bbb; color: #666; }
.combo select { appearance: none; flex: 1; min-width: 0; border: 0; background: none; padding: 0 2px; font: inherit; color: inherit; opacity: 1; }
.font { width: 121px; }
.size { width: 27px; margin-right: 1px; }
.zoom { width: 67px; }
.filters { display: flex; }
.dot { width: 14px; height: 14px; border: 1px solid transparent; margin-right: 1px; }
.dot:last-child { margin-right: 0; }
.dot::before { content: ""; width: 10px; height: 10px; flex: none; border-radius: 50%; border: 1px solid rgba(0,0,0,.2); background: radial-gradient(var(--m) 1px, var(--c) 3px); }
.on { border-color: #777; background: #dedede; }
.pink { --c: #f48fc0; --m: #c8458c; }
.peach { --c: #f9bf8f; --m: #5a55c8; }
.sky { --c: #84c3f8; --m: #2344c8; }
.green { --c: #2e9463; --m: #1b3bb0; }
.violet { --c: #c592fa; --m: #4a34d8; }
.gold { --c: #fbc20c; --m: #6a54a8; }
.lemon { --c: #fbf77e; --m: #2f3ea8; }
.gray { --c: #b4b4b4; --m: #2f3ec8; }
.swoop { width: 28px; height: 34px; flex: none; }
.persp { flex: 1; padding: 4px 0 0 4px; }
.prow { display: flex; align-items: center; height: 14px; gap: 2px; }
.cur { height: 13px; padding: 0 3px 0 2px; gap: 2px; border: 1px solid #777; border-radius: 2px; background: #e3e3e3; }
.res { gap: 2px; }

/* workbench */
main { flex: 1; min-height: 0; display: flex; gap: 3px; padding: 0 4px 0 3px; }
.view { display: flex; flex-direction: column; min-height: 0; border: 1px solid #a3a3a3; border-radius: 5px 5px 0 0; }
.navigator { width: 154px; flex: none; }
.right { flex: 1; min-width: 0; display: flex; flex-direction: column; gap: 3px; }
.editor { flex: 1; }
.bottom { flex: 0 0 94px; }
.tabs { flex: none; display: flex; height: 14px; }
.tab { gap: 2px; padding: 0 2px; }
.slope { width: 18px; height: 14px; flex: none; }
.other { border-right: 1px solid #a0a0a0; border-bottom: 1px solid #a0a0a0; border-radius: 0 4px 0 0; margin-left: -5px; }
.edge { border-right: 1px solid #a0a0a0; border-bottom: 1px solid #a0a0a0; border-radius: 0 4px 0 0; }
.ctl { flex: 1; display: flex; justify-content: flex-end; align-items: center; gap: 1px; border-bottom: 1px solid #a0a0a0; }
.navigator .ctl { border-bottom: 1px solid #d0d0d0; }
.ctl button { width: 12px; }
.viewbar { flex: none; display: flex; justify-content: flex-end; align-items: center; height: 15px; border-bottom: 1px solid #ccc; }
.viewbar button { width: 14px; }
.treepane { flex: 1; background: #fff; padding-left: 26px; }
.tree { height: 114px; display: grid; grid-template-rows: repeat(10, 1fr); }
.tree li { display: flex; align-items: center; gap: 3px; }
.root { margin-left: -14px; }
.root span { display: flex; gap: 2px; padding: 0 2px; border: 1px solid #d5d5d5; border-radius: 2px; background: #f3f3f3; }

.editor { border-color: #8aa8cf; }
.first { padding-right: 17px; border-bottom: 1px solid #8ba5c6; }
.active { background: linear-gradient(#cbdaeb, #92b1d5); border-left: 1px solid #8ba5c6; border-radius: 5px 0 0 0; padding-right: 0; }
.edbody { flex: 1; min-height: 0; display: flex; border: solid #99b4d1; border-width: 1px 0; }
.canvaswrap { flex: 1; min-width: 0; display: flex; flex-direction: column; }
.canvasrow { flex: 1; min-height: 0; display: flex; background: #fff; }
.canvas { flex: 1; min-width: 0; height: 100%; overflow: hidden; }
.lbl { font: 7px "Open Sans", sans-serif; text-anchor: middle; fill: #220022; }
.out { flex: 1; }
.vbar { width: 10px; flex: none; display: flex; flex-direction: column; align-items: center; background: #ececec; }
.vbar i, .hbar i { width: 0; height: 0; border: 2px solid transparent; flex: none; }
.vbar .up { margin: 2px 0 4px; border-bottom-color: #444; }
.vbar .down { margin: auto 0 3px; border-top-color: #444; }
.thumb { width: 10px; height: 214px; flex: 0 1 auto; border: 1px solid #aaa; border-radius: 1px; background: repeating-linear-gradient(#777 0 1px, transparent 1px 2px) center / 4px 5px no-repeat, linear-gradient(90deg, #f4f4f4, #dcdcdc 50%, #c6c6c6); }
.hbar { flex: none; height: 10px; display: flex; align-items: center; justify-content: space-between; padding: 0 13px 0 3px; background: #ececec; }
.hbar .lt { border-right-color: #444; }
.hbar .rt { border-left-color: #444; }

.palette { width: 140px; flex: none; display: flex; flex-direction: column; border-left: 1px solid #8c8c8c; margin-left: 2px; background: #fff; }
.palette .end { margin-left: auto; }
.phead, .ptools, .dhead, .drawers button { display: flex; align-items: center; justify-content: flex-start; gap: 2px; padding: 0 2px; flex: none; }
.phead { height: 15px; background: linear-gradient(#fff, #ececec); border-bottom: 1px solid #ccc; }
.ptools { height: 14px; background: #f0f0f0; }
.ptools button { width: 10px; }
.ptools .sm { width: 6px; }
.dhead { height: 15px; background: #f0f0f0; border-top: 1px solid #bbb; border-bottom: 1px solid #e2e2e2; }
.pitems { display: grid; padding: 0 0 1px 9px; }
.pitems li { display: flex; align-items: center; gap: 1px; }
.pitems .gap { gap: 3px; }
.two { height: 31px; }
.five { height: 73px; }
.drawers { margin-top: auto; }
.drawers button { width: 100%; height: 14px; border-top: 1px solid #aaa; background: linear-gradient(#f4f4f4, #c9c9c9); }

.front { padding: 0 0 0 3px; }
.debug { flex: none; height: 13px; border-bottom: 1px solid #c4c4c4; }

/* status line and taskbar */
.status { flex: none; height: 17px; display: flex; align-items: center; padding-left: 4px; }
.status .far { margin-left: auto; margin-right: 180px; }
.taskbar {
  flex: none;
  height: 27px;
  display: flex;
  color: #fff;
  border-top: 1px solid #8a5063;
  background: linear-gradient(90deg, #5c0718 0, #550719 45%, #3a0a18 58%, #200510 64%, #3b0714 75%, #1d040c 84%, #3a0a24 100%);
}
.taskbar button svg { width: 20px; height: 20px; }
.taskbar .start { width: 35px; margin-right: 2px; }
.taskbar .start svg { width: 24px; height: 24px; }
.app { width: 37px; height: 25px; margin: 0 1px; border: 1px solid transparent; border-radius: 2px; }
.open { border-color: #b08a95; background: linear-gradient(120deg, #9b6c79, #6a2c3c 45%, #551523); }
.lit { background: linear-gradient(120deg, #dcc5cd, #a77c89 60%, #93606f); border-color: #e4d2d8; }
.tray { margin-left: auto; display: flex; align-items: center; gap: 5px; }
.clock { width: 36px; text-align: center; background: radial-gradient(ellipse at 50% 0, #b34b8c, transparent 60%); align-self: stretch; padding-top: 3px; margin-left: 5px; }
.taskbar .desk { width: 8px; height: 25px; border: 1px solid #8a6a78; background: linear-gradient(#6b4455, #2b101c); }
```
